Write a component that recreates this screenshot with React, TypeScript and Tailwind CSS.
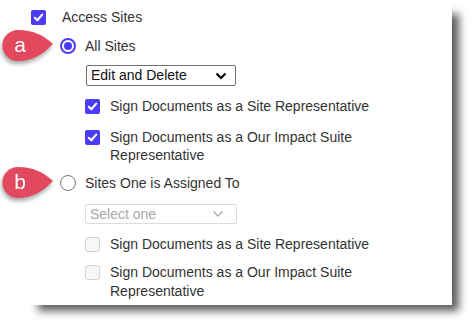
import React from "react";

const Checkbox = ({ checked }: { checked: boolean }) =>
  checked ? (
    <span className="w-[15px] h-[15px] shrink-0 rounded-[2px] bg-[#4a3cf4] flex items-center justify-center">
      <svg width="11" height="11" viewBox="0 0 11 11">
        <path d="M1.8 5.8 L4.3 8.3 L9.2 2.6" fill="none" stroke="#fff" strokeWidth="2.2" strokeLinecap="round" strokeLinejoin="round" />
      </svg>
    </span>
  ) : (
    <span className="block w-[15px] h-[15px] shrink-0 rounded-[3px] border border-[#d4d4d4] bg-[#f7f7f7]" />
  );

const Radio = ({ checked }: { checked: boolean }) =>
  checked ? (
    <span className="w-[16px] h-[16px] shrink-0 rounded-full border-2 border-[#4a3cf4] flex items-center justify-center">
      <span className="w-[8px] h-[8px] rounded-full bg-[#4a3cf4]" />
    </span>
  ) : (
    <span className="block w-[16px] h-[16px] shrink-0 rounded-full border-[1.5px] border-[#767676] bg-white" />
  );

const Badge = ({ letter }: { letter: string }) => (
  <svg
    width="58"
    height="44"
    viewBox="0 0 58 44"
    className="absolute left-[-60px] top-[-12px] drop-shadow-[-1px_3px_2px_rgba(0,0,0,0.35)]"
  >
    <path
      d="M53 19 C43 10 33 5 18 5 A15.5 15.5 0 1 0 18 36 C33 36 43 29 53 19 Z"
      fill="#e2495f"
    />
    <text
      x="20"
      y="27"
      textAnchor="middle"
      fill="#fff"
      fontSize="21"
      fontFamily="'Liberation Sans', Arial, sans-serif"
    >
      {letter}
    </text>
  </svg>
);

const Chevron = ({ dark }: { dark: boolean }) => (
  <svg width="12" height="8" viewBox="0 0 12 8">
    <path
      d="M1.5 1.5 L6 6 L10.5 1.5"
      fill="none"
      stroke={dark ? "#000" : "#a6a6a6"}
      strokeWidth={dark ? 2.2 : 1.3}
    />
  </svg>
);

export default function App() {
  return (
    <div className="w-[475px] h-[328px] bg-white relative overflow-hidden font-['Liberation_Sans',Arial,sans-serif] text-[14px] text-[#333]">
      <div className="absolute left-[38px] top-[14px] w-[421px] h-[297px] bg-[#5c5c5c] blur-[4px]" />
      <div className="relative w-[452px] h-[305px] bg-white pl-[31px] pt-[8px] flex flex-col">
        <div className="h-[18px] flex items-center gap-[16px]">
          <Checkbox checked />
          <span>Access Sites</span>
        </div>

        <div className="relative mt-[11px] ml-[29px] h-[18px] flex items-center gap-[9px]">
          <Badge letter="a" />
          <Radio checked />
          <span>All Sites</span>
        </div>

        <div className="mt-[10px] ml-[55px] w-[150px] h-[21px] border border-[#707070] rounded-[2px] flex items-center justify-between pl-[4px] pr-[8px] text-[#111]">
          <span>Edit and Delete</span>
          <Chevron dark />
        </div>

        <div className="mt-[11px] ml-[54px] h-[18px] flex items-center gap-[10px]">
          <Checkbox checked />
          <span>Sign Documents as a Site Representative</span>
        </div>

        <div className="mt-[13px] ml-[54px] flex items-start gap-[10px] leading-[18px]">
          <span className="mt-[2px]">
            <Checkbox checked />
          </span>
          <span>
            Sign Documents as a Our Impact Suite
            <br />
            Representative
          </span>
        </div>

        <div className="relative mt-[10px] ml-[29px] h-[18px] flex items-center gap-[9px]">
          <Badge letter="b" />
          <Radio checked={false} />
          <span>Sites One is Assigned To</span>
        </div>

        <div className="mt-[12px] ml-[54px] w-[152px] h-[20px] border border-[#dcdcdc] rounded-[2px] flex items-center justify-between pl-[4px] pr-[12px] text-[#a8a8a8]">
          <span>Select one</span>
          <Chevron dark={false} />
        </div>

        <div className="mt-[11px] ml-[54px] h-[18px] flex items-center gap-[10px]">
          <Checkbox checked={false} />
          <span>Sign Documents as a Site Representative</span>
        </div>

        <div className="mt-[10px] ml-[54px] flex items-start gap-[10px] leading-[19px]">
          <span className="mt-[2px]">
            <Checkbox checked={false} />
          </span>
          <span>
            Sign Documents as a Our Impact Suite
            <br />
            Representative
          </span>
        </div>
      </div>
    </div>
  );
}
